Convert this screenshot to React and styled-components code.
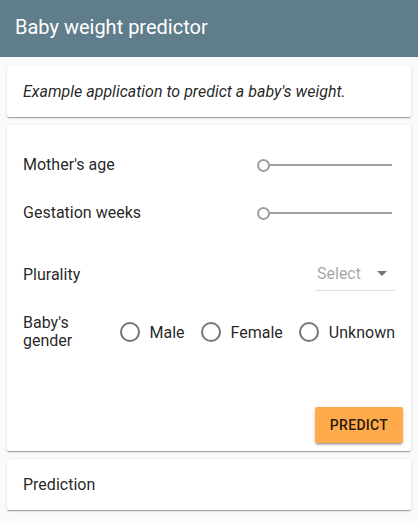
import React, { useState } from 'react';
import styled, { createGlobalStyle } from 'styled-components';

const GlobalStyle = createGlobalStyle`
  body {
    margin: 0;
    background: #fafafa;
    font-family: Roboto, "Liberation Sans", sans-serif;
    color: rgba(0, 0, 0, 0.87);
  }
`;

const Toolbar = styled.header`
  box-sizing: border-box;
  height: 57px;
  display: flex;
  align-items: center;
  padding: 0 15px 4px;
  background: #607d8b;
  color: #fff;
  font-size: 20px;
`;

const Page = styled.main`
  display: flex;
  flex-direction: column;
  gap: 8px;
  padding: 9px 7px 8px;
`;

const Card = styled.section`
  background: #fff;
  border-radius: 2px;
  padding: ${p => p.$padding || '16px'};
  box-shadow: 0 2px 1px -1px rgba(0, 0, 0, 0.2), 0 1px 1px 0 rgba(0, 0, 0, 0.14),
    0 1px 3px 0 rgba(0, 0, 0, 0.12);
`;

const Intro = styled.p`
  margin: 0;
  font-size: 16px;
  line-height: 19px;
  font-style: italic;
`;

const Form = styled.div`
  display: flex;
  flex-direction: column;
`;

const Row = styled.div`
  display: flex;
  align-items: center;
  justify-content: space-between;
  height: ${p => p.$height || 48}px;
  margin-top: ${p => p.$top || 0}px;
`;

const Label = styled.span`
  font-size: 16px;
  line-height: 18px;
`;

const Slider = styled.div`
  position: relative;
  width: 135px;
  height: 12px;
  margin-right: 3px;
  display: flex;
  align-items: center;

  &::before {
    content: '';
    position: absolute;
    left: 12px;
    right: 0;
    height: 2px;
    background: #9e9e9e;
  }
`;

const Thumb = styled.span`
  position: relative;
  z-index: 1;
  flex-shrink: 0;
  box-sizing: border-box;
  width: 13px;
  height: 13px;
  border: 2px solid #9e9e9e;
  border-radius: 50%;
  background: #fff;
`;

const Select = styled.div`
  box-sizing: border-box;
  width: 80px;
  height: 34px;
  margin-top: -2px;
  display: flex;
  align-items: center;
  justify-content: space-between;
  padding: 0 8px 0 2px;
  border-bottom: 1px solid rgba(0, 0, 0, 0.12);
  color: rgba(0, 0, 0, 0.38);
  font-size: 16px;
`;

const Arrow = styled.span`
  width: 0;
  height: 0;
  border-left: 5px solid transparent;
  border-right: 5px solid transparent;
  border-top: 5px solid rgba(0, 0, 0, 0.54);
`;

const RadioGroup = styled.div`
  display: flex;
  align-items: center;
  gap: 16px;
`;

const RadioOption = styled.label`
  display: flex;
  align-items: center;
  gap: 10px;
  font-size: 16px;
  cursor: pointer;
`;

const RadioCircle = styled.span`
  box-sizing: border-box;
  width: 20px;
  height: 20px;
  border: 2px solid rgba(0, 0, 0, 0.54);
  border-radius: 50%;
`;

const Actions = styled.div`
  display: flex;
  justify-content: flex-end;
  margin: 51px -8px 0 0;
`;

const PredictButton = styled.button`
  width: 88px;
  height: 36px;
  border: none;
  border-radius: 2px;
  background: #ffab4b;
  color: rgba(0, 0, 0, 0.87);
  font-family: Roboto, "Liberation Sans", sans-serif;
  font-size: 14px;
  font-weight: 500;
  letter-spacing: 0.3px;
  box-shadow: 0 3px 1px -2px rgba(0, 0, 0, 0.2), 0 2px 2px 0 rgba(0, 0, 0, 0.14),
    0 1px 5px 0 rgba(0, 0, 0, 0.12);
`;

const ResultTitle = styled.div`
  font-size: 16px;
  line-height: 19px;
`;

const genders = ['Male', 'Female', 'Unknown'];

export default function App() {
  const [gender, setGender] = useState(null);

  return (
    <>
      <GlobalStyle />
      <Toolbar>Baby weight predictor</Toolbar>
      <Page>
        <Card>
          <Intro>Example application to predict a baby's weight.</Intro>
        </Card>
        <Card $padding="16px 16px 8px">
          <Form>
            <Row>
              <Label>Mother's age</Label>
              <Slider><Thumb /></Slider>
            </Row>
            <Row>
              <Label>Gestation weeks</Label>
              <Slider><Thumb /></Slider>
            </Row>
            <Row $top={14}>
              <Label>Plurality</Label>
              <Select>
                Select
                <Arrow />
              </Select>
            </Row>
            <Row $top={9}>
              <Label>Baby's<br />gender</Label>
              <RadioGroup>
                {genders.map(g => (
                  <RadioOption key={g} onClick={() => setGender(g)}>
                    <RadioCircle />
                    {g}
                  </RadioOption>
                ))}
              </RadioGroup>
            </Row>
            <Actions>
              <PredictButton>PREDICT</PredictButton>
            </Actions>
          </Form>
        </Card>
        <Card>
          <ResultTitle>Prediction</ResultTitle>
        </Card>
      </Page>
    </>
  );
}
